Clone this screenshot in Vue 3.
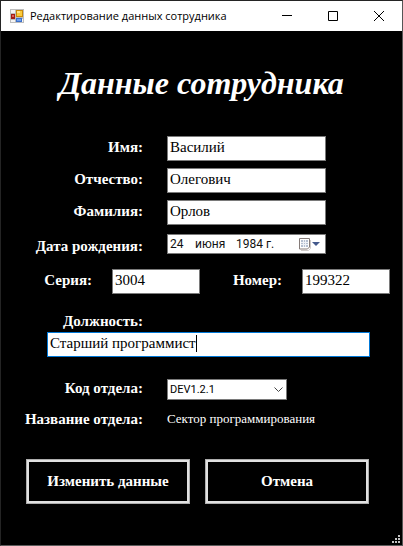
<script setup>
import { reactive } from 'vue'

const employee = reactive({
  firstName: 'Василий',
  patronymic: 'Олегович',
  lastName: 'Орлов',
  day: '24',
  month: 'июня',
  year: '1984 г.',
  series: '3004',
  number: '199322',
  position: 'Старший программист',
  department: 'DEV1.2.1',
})

const nameFields = [
  { key: 'firstName', label: 'Имя:' },
  { key: 'patronymic', label: 'Отчество:' },
  { key: 'lastName', label: 'Фамилия:' },
]
</script>

<template>
  <div class="window">
    <header class="titlebar">
      <svg class="app-icon" width="14" height="14" viewBox="0 0 14 14" shape-rendering="crispEdges" aria-hidden="true">
        <rect width="14" height="14" fill="#bdbdbd" />
        <rect x="1" y="1" width="4" height="3" fill="#f4f4f4" />
        <rect x="1" y="11" width="4" height="2" fill="#f4f4f4" />
        <rect x="12" y="10" width="1" height="3" fill="#f4f4f4" />
        <rect x="6" y="1" width="7" height="7" fill="#c8890a" />
        <rect x="7" y="2" width="5" height="5" fill="#fbcb3c" />
        <rect x="7" y="2" width="3" height="2" fill="#ffe489" />
        <rect x="1" y="5" width="4" height="5" fill="#a31d16" />
        <rect x="2" y="6" width="2" height="2" fill="#e0605a" />
        <rect x="6" y="9" width="6" height="4" fill="#3b6fc9" />
        <rect x="7" y="10" width="4" height="2" fill="#6f9fee" />
      </svg>
      <span class="caption">Редактирование данных сотрудника</span>
      <button class="win-btn" type="button" aria-label="Свернуть">
        <svg width="10" height="10" viewBox="0 0 10 10"><path d="M0 4.5H10" stroke="#000" /></svg>
      </button>
      <button class="win-btn" type="button" aria-label="Развернуть">
        <svg width="10" height="10" viewBox="0 0 10 10"><path d="M.5.5h9v9h-9z" fill="none" stroke="#000" /></svg>
      </button>
      <button class="win-btn" type="button" aria-label="Закрыть">
        <svg width="10" height="10" viewBox="0 0 10 10"><path d="M0 0L10 10M10 0L0 10" stroke="#000" /></svg>
      </button>
    </header>

    <form class="form" @submit.prevent>
      <h1>Данные сотрудника</h1>

      <div class="fields">
        <div v-for="f in nameFields" :key="f.key" class="row">
          <label :for="f.key">{{ f.label }}</label>
          <input :id="f.key" v-model="employee[f.key]" class="box" type="text" />
        </div>
      </div>

      <div class="row date-row">
        <label for="day">Дата рождения:</label>
        <div class="date">
          <input id="day" v-model="employee.day" class="part day" type="text" />
          <input v-model="employee.month" class="part month" type="text" aria-label="Месяц" />
          <input v-model="employee.year" class="part year" type="text" aria-label="Год" />
          <button class="calendar" type="button" aria-label="Календарь">
            <svg width="21" height="14" viewBox="0 0 21 14">
              <path d="M2 13.5h7.5l2-2V3" fill="none" stroke="#cfcac8" />
              <path d="M.5 1.5h10v8.500l-2 2h-8z" fill="#fff" stroke="#857b78" />
              <path d="M2 3h7v7H2z" fill="#b4bfd0" />
              <path d="M2 5.500h7M2 7.500h7M4.500 3v7M6.500 3v7" stroke="#eef1f6" />
              <path d="M13 5h8l-4 4z" fill="#44598c" />
            </svg>
          </button>
        </div>
      </div>

      <div class="passport">
        <label for="series">Серия:</label>
        <input id="series" v-model="employee.series" class="box" type="text" />
        <label for="number">Номер:</label>
        <input id="number" v-model="employee.number" class="box" type="text" />
      </div>

      <div class="position">
        <label for="position">Должность:</label>
        <div class="active-box">
          <input id="position" v-model="employee.position" class="box" type="text" />
          <span class="caret" aria-hidden="true">{{ employee.position }}</span>
        </div>
      </div>

      <div class="row dept-row">
        <label for="department">Код отдела:</label>
        <div class="select">
          <select id="department" v-model="employee.department">
            <option>DEV1.2.1</option>
          </select>
          <svg width="9" height="6" viewBox="0 0 9 6" aria-hidden="true"><path d="M.5.5l4 4 4-4" fill="none" stroke="#444" /></svg>
        </div>
      </div>

      <div class="row name-row">
        <span class="term">Название отдела:</span>
        <output for="department">Сектор программирования</output>
      </div>

      <div class="actions">
        <button type="submit">Изменить данные</button>
        <button type="button">Отмена</button>
      </div>
    </form>

    <svg class="grip" width="8" height="8" viewBox="0 0 8 8" shape-rendering="crispEdges" aria-hidden="true">
      <path d="M6 0h2v2H6zM3 3h2v2H3zM6 3h2v2H6zM0 6h2v2H0zM3 6h2v2H3zM6 6h2v2H6z" fill="#c4c4c4" />
    </svg>
  </div>
</template>

<style>
body {
  background: #000;
}
</style>

<style scoped>
.window {
  position: relative;
  display: flex;
  flex-direction: column;
  box-sizing: border-box;
  min-height: 100vh;
  border: 1px solid #242424;
  border-right-color: #555;
  border-bottom-color: #5c5c5c;
  background: #000;
  color: #fff;
  font-family: "Liberation Serif", "Times New Roman", serif;
  font-size: 15px;
}

.window *,
.window *::after {
  box-sizing: border-box;
}

input,
select,
button {
  margin: 0;
  border-radius: 0;
  font: inherit;
}

.titlebar {
  display: flex;
  align-items: center;
  height: 30px;
  padding-left: 9px;
  background: #fff;
  color: #000;
}

.app-icon {
  flex: none;
}

.caption {
  flex: 1;
  padding-left: 6px;
  overflow: hidden;
  white-space: nowrap;
  font: 11px/16px "Open Sans", "Noto Sans", sans-serif;
}

.win-btn {
  display: flex;
  flex: none;
  align-items: center;
  justify-content: center;
  width: 46px;
  height: 30px;
  padding: 0;
  border: 0;
  background: none;
}

h1 {
  margin: 0;
  padding: 32px 0 33px;
  font-size: 32px;
  font-style: italic;
  font-weight: bold;
  line-height: 40px;
  text-align: center;
  white-space: nowrap;
}

label,
.term {
  font-weight: bold;
  line-height: 20px;
  white-space: nowrap;
}

.fields {
  display: grid;
  gap: 7px;
}

.row {
  display: grid;
  grid-template-columns: 142px minmax(0, 1fr);
  column-gap: 24px;
  align-items: center;
  padding-right: 76px;
}

.row label,
.term,
.passport label {
  justify-self: end;
}

.row label,
.passport label {
  padding-bottom: 3px;
}

.box {
  display: block;
  width: 100%;
  min-width: 0;
  height: 25px;
  padding: 0 2px 2px;
  border: 1px solid #7a7a7a;
  outline: none;
  background: #fff;
  color: #000;
}

.date-row {
  padding-top: 9px;
}

.date-row label {
  padding: 4px 0 0;
  line-height: 16px;
}

.date {
  display: flex;
  align-items: center;
  height: 20px;
  padding: 0 5px 0 2px;
  border: 1px solid #7a7a7a;
  background: #fff;
  color: #000;
  font: 12px "Roboto", "Liberation Sans", sans-serif;
}

.part {
  min-width: 0;
  padding: 0;
  border: 0;
  outline: none;
  background: none;
  color: #111;
}

.day {
  width: 25px;
}

.month {
  width: 41px;
}

.year {
  flex: 1;
}

.calendar {
  display: flex;
  flex: none;
  padding: 0;
  border: 0;
  background: none;
}

.passport {
  display: grid;
  grid-template-columns: 111px 1fr 102px 1fr;
  align-items: center;
  padding: 15px 12px 0 0;
}

.passport label {
  padding-right: 20px;
}

.position {
  padding: 17px 32px 0 46px;
}

.position label {
  display: block;
  width: 96px;
  padding-bottom: 1px;
  text-align: right;
}

.active-box {
  position: relative;
}

.active-box .box {
  border-color: #0078d7;
  caret-color: transparent;
}

.caret {
  position: absolute;
  top: 3px;
  left: 3px;
  height: 17px;
  border-right: 1px solid #000;
  color: transparent;
  white-space: pre;
  pointer-events: none;
}

.dept-row {
  padding: 21px 115px 0 0;
}

.select {
  position: relative;
}

.select select {
  display: block;
  width: 100%;
  height: 21px;
  padding: 0 20px 0 2px;
  border: 1px solid #7a7a7a;
  appearance: none;
  background: #fff;
  color: #000;
  font: 11px "Roboto", "Liberation Sans", sans-serif;
}

.select svg {
  position: absolute;
  top: 8px;
  right: 4px;
  pointer-events: none;
}

.name-row {
  padding-top: 8px;
  padding-right: 20px;
}

.name-row output {
  font-size: 13px;
  white-space: nowrap;
}

.actions {
  display: grid;
  grid-template-columns: 1fr 1fr;
  gap: 15px;
  padding: 30px 33px 41px 25px;
}

.actions button {
  height: 45px;
  padding: 0;
  border: 3px solid #e1e1e1;
  outline: 1px solid #adadad;
  outline-offset: -1px;
  background: #000;
  color: #fff;
  font-size: 15px;
  font-weight: bold;
  white-space: nowrap;
}

.grip {
  position: absolute;
  right: 2px;
  bottom: 2px;
}
</style>
